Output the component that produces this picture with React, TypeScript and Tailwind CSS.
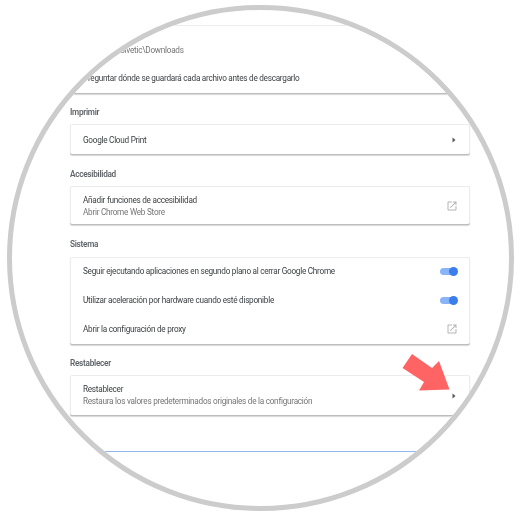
const CARD = 'bg-white border-t border-x border-[#ececec] rounded-[2px] shadow-[0_1px_0_#bdbdbd,0_2px_1px_#d8d8d8]'
const HEADING = 'h-[13px] flex items-center text-[8.2px] tracking-[-0.26px] leading-none font-semibold text-[#5f6368]'
const PRIMARY = 'text-[8.2px] tracking-[-0.26px] leading-[12px] text-[#3c4043]'
const SECONDARY = 'text-[8.2px] tracking-[-0.26px] leading-[12px] text-[#757575]'

function ArrowRight() {
  return (
    <svg width="4" height="6" viewBox="0 0 4 6" className="shrink-0">
      <path d="M0.5 0.5 L3.5 3 L0.5 5.5 Z" fill="#5a5a5a" />
    </svg>
  )
}

function OpenInNew() {
  return (
    <svg width="12" height="12" viewBox="0 0 24 24" className="shrink-0">
      <path
        fill="#b5b5b5"
        d="M19 19H5V5h7V3H5c-1.11 0-2 .9-2 2v14c0 1.1.89 2 2 2h14c1.1 0 2-.9 2-2v-7h-2v7zM14 3v2h3.59l-9.83 9.83 1.41 1.41L19 6.41V10h2V3h-7z"
      />
    </svg>
  )
}

function Toggle() {
  return (
    <div className="flex items-center shrink-0 w-[18px]">
      <div className="w-[15px] h-[7px] rounded-full bg-[#8ab4f8]" />
      <div className="w-[9px] h-[9px] rounded-full bg-[#3b7ded] -ml-[6px]" />
    </div>
  )
}

function Section({ title, children }: { title: string; children: React.ReactNode }) {
  return (
    <section>
      <h2 className={HEADING}>{title}</h2>
      {children}
    </section>
  )
}

export default function App() {
  return (
    <div className="w-[520px] h-[516px] bg-white pt-[5px] pl-[7px] font-['Roboto',sans-serif] blur-[0.35px]">
      <div className="relative w-[507px] h-[506px] rounded-full border-[5px] border-[#cccccc] overflow-hidden">
        <div className="w-[400px] ml-[58px] pt-[15px]">
          <div className={`${CARD} h-[68px] pl-[12px] flex flex-col`}>
            <div className="h-[18px]" />
            <div className={SECONDARY}>C:\Users\Solvetic\Downloads</div>
            <div className={`${PRIMARY} mt-[16px]`}>Preguntar dónde se guardará cada archivo antes de descargarlo</div>
          </div>

          <div className="mt-[13px]">
            <Section title="Imprimir">
              <div className={`${CARD} mt-[5px] h-[30px] pl-[12px] pr-[13px] flex items-center justify-between`}>
                <span className={PRIMARY}>Google Cloud Print</span>
                <ArrowRight />
              </div>
            </Section>
          </div>

          <div className="mt-[14px]">
            <Section title="Accesibilidad">
              <div className={`${CARD} mt-[5px] h-[38px] pl-[12px] pr-[11px] flex items-center justify-between`}>
                <div>
                  <div className={PRIMARY}>Añadir funciones de accesibilidad</div>
                  <div className={SECONDARY}>Abrir Chrome Web Store</div>
                </div>
                <OpenInNew />
              </div>
            </Section>
          </div>

          <div className="mt-[14px]">
            <Section title="Sistema">
              <div className={`${CARD} mt-[6px] h-[87px] pl-[12px] pr-[11px] pt-[7px] pb-[9px] flex flex-col justify-between`}>
                <div className="flex items-center justify-between">
                  <span className={PRIMARY}>Seguir ejecutando aplicaciones en segundo plano al cerrar Google Chrome</span>
                  <Toggle />
                </div>
                <div className="flex items-center justify-between">
                  <span className={PRIMARY}>Utilizar aceleración por hardware cuando esté disponible</span>
                  <Toggle />
                </div>
                <div className="flex items-center justify-between">
                  <span className={PRIMARY}>Abrir la configuración de proxy</span>
                  <OpenInNew />
                </div>
              </div>
            </Section>
          </div>

          <div className="mt-[13px]">
            <Section title="Restablecer">
              <div className={`${CARD} mt-[5px] h-[40px] pl-[12px] pr-[13px] flex items-center justify-between`}>
                <div className="pb-[2px]">
                  <div className={PRIMARY}>Restablecer</div>
                  <div className={SECONDARY}>Restaura los valores predeterminados originales de la configuración</div>
                </div>
                <ArrowRight />
              </div>
            </Section>
          </div>

          <div className="mt-[36px] h-px bg-[#8fb8f0]" />
        </div>

        {/* red arrow over the last row */}
        <svg width="50" height="40" viewBox="0 0 50 40" className="absolute left-[390px] top-[344px]">
          <path d="M10 0 L30 14 L37 7 L47.5 35.5 L17 36.5 L22 28 L0.5 14 Z" fill="#ff6464" />
        </svg>
      </div>
    </div>
  )
}
